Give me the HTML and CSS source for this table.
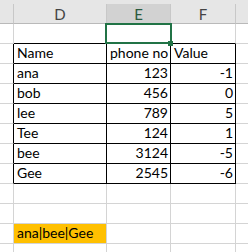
FILE: index.html
```html
<!DOCTYPE html>
<html>
<head>
<meta charset="utf-8">
<link rel="stylesheet" href="styles.css">
</head>
<body>
<div class="sheet">
  <div class="row head">
    <div class="c rh"></div>
    <div class="c d">D</div>
    <div class="c e selhead">E</div>
    <div class="c f">F</div>
    <div class="c g"></div>
  </div>
  <div class="row">
    <div class="c rh"></div>
    <div class="c d tb"></div>
    <div class="c e tb active"></div>
    <div class="c f tb"></div>
    <div class="c g"></div>
  </div>
  <div class="row">
    <div class="c rh tl"></div>
    <div class="c d t">Name</div>
    <div class="c e t">phone no</div>
    <div class="c f t">Value</div>
    <div class="c g"></div>
  </div>
  <div class="row">
    <div class="c rh tl"></div>
    <div class="c d t">ana</div>
    <div class="c e t num">123</div>
    <div class="c f t num">-1</div>
    <div class="c g"></div>
  </div>
  <div class="row">
    <div class="c rh tl"></div>
    <div class="c d t">bob</div>
    <div class="c e t num">456</div>
    <div class="c f t num">0</div>
    <div class="c g"></div>
  </div>
  <div class="row">
    <div class="c rh tl"></div>
    <div class="c d t">lee</div>
    <div class="c e t num">789</div>
    <div class="c f t num">5</div>
    <div class="c g"></div>
  </div>
  <div class="row">
    <div class="c rh tl"></div>
    <div class="c d t">Tee</div>
    <div class="c e t num">124</div>
    <div class="c f t num">1</div>
    <div class="c g"></div>
  </div>
  <div class="row">
    <div class="c rh tl"></div>
    <div class="c d t">bee</div>
    <div class="c e t num">3124</div>
    <div class="c f t num">-5</div>
    <div class="c g"></div>
  </div>
  <div class="row">
    <div class="c rh tl"></div>
    <div class="c d t">Gee</div>
    <div class="c e t num">2545</div>
    <div class="c f t num">-6</div>
    <div class="c g"></div>
  </div>
  <div class="row">
    <div class="c rh"></div>
    <div class="c d"></div>
    <div class="c e"></div>
    <div class="c f"></div>
    <div class="c g"></div>
  </div>
  <div class="row">
    <div class="c rh"></div>
    <div class="c d"></div>
    <div class="c e"></div>
    <div class="c f"></div>
    <div class="c g"></div>
  </div>
  <div class="row">
    <div class="c rh"></div>
    <div class="c d hl">ana|bee|Gee</div>
    <div class="c e"></div>
    <div class="c f"></div>
    <div class="c g"></div>
  </div>
  <div class="row">
    <div class="c rh"></div>
    <div class="c d"></div>
    <div class="c e"></div>
    <div class="c f"></div>
    <div class="c g"></div>
  </div>
</div>
</body>
</html>
```

FILE: styles.css
```css
html, body {
  margin: 0;
  padding: 0;
  background: #ffffff;
}

.sheet {
  width: 248px;
  height: 252px;
  overflow: hidden;
  font-family: Lato, "Noto Sans", sans-serif;
  font-size: 14px;
  color: #000000;
}

.row {
  display: flex;
  height: 20px;
}

.c {
  box-sizing: border-box;
  height: 100%;
  border-right: 1px solid #d4d4d4;
  border-bottom: 1px solid #d4d4d4;
  display: flex;
  align-items: flex-end;
  padding: 0 2px 2px 3px;
  line-height: 16px;
  white-space: nowrap;
  overflow: visible;
}

.rh { width: 14px; flex: none; padding: 0; }
.d { width: 93px; flex: none; }
.e { width: 64px; flex: none; }
.f { width: 65px; flex: none; }
.g { flex: 1; border-right: none; padding: 0; }

.head {
  height: 24px;
  padding-top: 4px;
  box-sizing: border-box;
  background: #e6e6e6;
}

.head .c {
  border-right-color: #c8c8c8;
  border-bottom-color: #b9b9b9;
  justify-content: center;
  align-items: center;
  padding: 0;
  color: #444444;
  font-size: 15px;
}

.head .rh { border-right-color: #c8c8c8; }

.head .selhead {
  background: #d2d2d2;
  color: #2a5a3e;
}

.tb { border-bottom-color: #000000; }
.tl { border-right-color: #000000; }
.t { border-right-color: #000000; border-bottom-color: #000000; }

.num { justify-content: flex-end; }

.hl {
  background: #ffc000;
}

.active { position: relative; }

.active::after {
  content: "";
  position: absolute;
  left: -2px;
  top: -1px;
  right: -2px;
  bottom: -1px;
  border: 2px solid #217346;
}

.active::before {
  content: "";
  position: absolute;
  right: -3px;
  bottom: -3px;
  width: 5px;
  height: 5px;
  box-sizing: border-box;
  background: #217346;
  z-index: 2;
}
```
